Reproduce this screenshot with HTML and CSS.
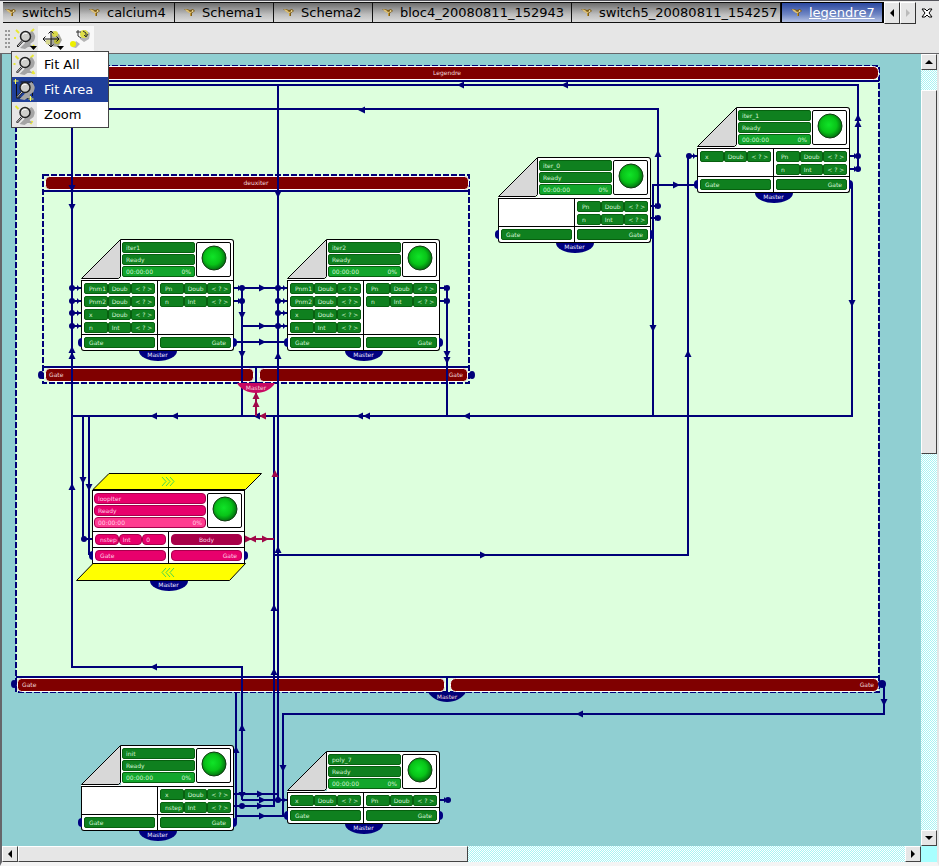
FILE: index.html
```html
<!DOCTYPE html>
<html lang="en">
<head>
<meta charset="utf-8">
<title>legendre7</title>
<link rel="stylesheet" href="styles.css">
</head>
<body>
<svg class="defs" aria-hidden="true">
  <defs>
    <radialGradient id="led" cx="45%" cy="45%" r="55%">
      <stop offset="0" stop-color="#10e428"/><stop offset=".6" stop-color="#08c418"/><stop offset="1" stop-color="#047010"/>
    </radialGradient>
    <symbol id="lamp" viewBox="0 0 26 26"><circle cx="13" cy="13" r="12" fill="url(#led)" stroke="#123c12"/></symbol>
    <symbol id="fold" viewBox="0 0 40 42">
      <path d="M.5 39.500L39.500 .5V37.500L37.500 39.500Z" fill="#d8d8d8" stroke="#000"/>
      <path d="M0 40H40V41H0Z" fill="#fff"/><path d="M0 41H40V42H0Z"/>
    </symbol>
    <symbol id="tabicon" viewBox="0 0 12 10">
      <path d="M0 1L4 4L6 5V8H8V5L11 3L9 1L6 2L3 1Z" fill="#7c5c18"/>
      <path d="M1 1L4 2L6 4L9 3L7 5H5L2 3Z" fill="#dcc078"/><path d="M8 2L10 3L8 4Z" fill="#fff0b0"/><path d="M6.500 5V8" stroke="#c09838"/>
    </symbol>
    <symbol id="lens" viewBox="0 0 24 24">
      <path d="M7 21L12 16L13 8L19 4Q24 8 21 14L17 17L20 20H15L12 22Z" fill="#a4a4a4"/>
      <circle cx="12.500" cy="9.500" r="5" fill="#cfcfcb" stroke="#222" stroke-width="1.500"/>
      <path d="M9.500 8Q11 5.500 14 6.500" stroke="#fff" fill="none"/>
      <path d="M9 13.500L4 19L5 20L10 14.500" fill="#ddd" stroke="#222"/>
    </symbol>
    <symbol id="spark" viewBox="0 0 24 24"><path d="M3 3L6 6M21 2L18 5M3 11H1M20 18L22 21M19 20H22" stroke="#e8e838" stroke-width="2"/></symbol>
    <symbol id="move" viewBox="0 0 24 24">
      <path d="M12 4L19 7L22 13L18 20L10 19Z" fill="#a4a49c"/>
      <circle cx="15" cy="7" r="3" fill="#d8d848"/><circle cx="8" cy="15" r="2.500" fill="#d8d890"/><circle cx="17" cy="14" r="3" fill="#b8b838"/>
      <path d="M11 4V20M3 12H19M8.500 6.500L11 4L13.500 6.500M8.500 17.500L11 20L13.500 17.500M5.500 9.500L3 12L5.500 14.500M16.500 9.500L19 12L16.500 14.500" fill="none" stroke="#111"/>
    </symbol>
    <symbol id="rotate" viewBox="0 0 24 24">
      <path d="M17 3L22 6L21 12L16 15L12 12L14 8ZM8 14L12 17L8 21L4 20Z" fill="#b4b4b4"/>
      <circle cx="5" cy="17" r="3" fill="#eef000"/><circle cx="16" cy="7" r="4" fill="#dede48"/>
      <path d="M8 5H13M10 3V9L13 11M15 4L18 6V9M16 8L18 10L20 7" fill="none" stroke="#333"/>
    </symbol>
    <path id="ar" d="M-3-3.500L4 0L-3 3.500Z"/>
    <path id="al" d="M3-3.500L-4 0L3 3.500Z"/>
    <path id="au" d="M-3.500 3L0-4L3.500 3Z"/>
    <path id="ad" d="M-3.500-3L0 4L3.500-3Z"/>
    <circle id="dot" r="3"/>
    <path id="in" d="M0-1H9V1H0ZM5-3L8 0L5 3Z"/>
    <path id="master" d="M-19 0H19C16 6 8 10 0 10S-16 6-19 0Z"/>
  </defs>
</svg>

<nav class="tabbar" aria-label="Schemas">
  <div class="tabs">
    <button class="tab"><svg><use href="#tabicon"/></svg>switch5</button>
    <button class="tab"><svg><use href="#tabicon"/></svg>calcium4</button>
    <button class="tab"><svg><use href="#tabicon"/></svg>Schema1</button>
    <button class="tab"><svg><use href="#tabicon"/></svg>Schema2</button>
    <button class="tab"><svg><use href="#tabicon"/></svg>bloc4_20080811_152943</button>
    <button class="tab"><svg><use href="#tabicon"/></svg>switch5_20080811_154257</button>
    <button class="tab active"><svg><use href="#tabicon"/></svg><span>legendre7</span></button>
  </div>
  <button class="step" aria-label="Previous tabs"><svg viewBox="0 0 8 10"><path d="M6 1V9L2 5Z"/></svg></button>
  <button class="step off" aria-label="Next tabs" disabled><svg viewBox="0 0 8 10"><path d="M2 1V9L6 5Z"/></svg></button>
  <button class="close" aria-label="Close"><svg viewBox="0 0 12 10"><path d="M1 1H4L6 3L8 1H11L8 5L11 9H8L6 7L4 9H1L4 5Z" fill="#fff" stroke="#000"/></svg></button>
</nav>

<div class="toolbar">
  <span class="grip"></span>
  <div class="tool-wrap">
    <button class="tool pressed" aria-label="Zoom"><svg viewBox="0 0 24 24"><use href="#spark"/><use href="#lens"/><path d="M17 19H24L20.500 23Z"/></svg></button>
    <ul class="menu">
      <li><button><svg viewBox="0 0 24 24"><use href="#spark"/><use href="#lens"/></svg><span>Fit All</span></button></li>
      <li><button class="selected"><svg viewBox="0 0 24 24"><path d="M4 6V20H18M8 4H20V18" fill="none" stroke="#101010"/><use href="#lens"/><path d="M1 3H6M3 1V6M16 21H21M18 18V23" stroke="#ff5"/></svg><span>Fit Area</span></button></li>
      <li><button><svg viewBox="0 0 24 24"><path d="M3 3L6 6M20 18L18 21" stroke="#e8e838" stroke-width="2"/><use href="#lens"/></svg><span>Zoom</span></button></li>
    </ul>
  </div>
  <button class="tool" aria-label="Pan"><svg viewBox="0 0 24 24"><use href="#move"/><path d="M17 19H24L20.500 23Z"/></svg></button>
  <button class="tool" aria-label="Rotate"><svg viewBox="0 0 24 24"><use href="#rotate"/></svg></button>
</div>

<main class="view">
  <div class="canvas">
    <svg class="scene" viewBox="2 54 919 792">
      <g class="blocks">
        <rect class="area" x="16" y="66" width="863" height="626"/>
        <rect class="bar" x="17.500" y="66.500" width="861" height="13" rx="5"/>
        <rect class="bar" x="17.500" y="678.500" width="427" height="13" rx="4"/>
        <rect class="bar" x="450.500" y="678.500" width="428" height="13" rx="5"/>
        <path class="rule" d="M16 81H879M16 677H879M447 677V692"/>
        <text x="447" y="75" text-anchor="middle">Legendre</text>
        <text x="22" y="687">Gate</text><text x="874" y="687" text-anchor="end">Gate</text>
        <rect class="area" x="43" y="175" width="426" height="208"/>
        <rect class="bar" x="45.500" y="176.500" width="423" height="13" rx="4"/>
        <rect class="bar" x="45.500" y="368.500" width="208" height="13" rx="4"/>
        <rect class="bar" x="259.500" y="368.500" width="208" height="13" rx="4"/>
        <path class="rule" d="M43 191H469M43 367H469M256 367V383"/>
        <text x="256" y="185" text-anchor="middle">deuxiter</text>
        <text x="49" y="377">Gate</text><text x="463" y="377" text-anchor="end">Gate</text>
      </g>
      <g class="wires">
        <path d="M72 85H858V169M278 85V800M72 109H658V206M72 109V667H242V800M697 156H688V555H274M697 185H653V416M852 185V416H72M83 416V539H92M89 416V555M242 416V288H287M242 326H287M234 342H287M447 288V416M274 416V806H234M236 692V823M283 816V714H884V684M234 794H278M242 800H287M236 816H287"/>
        <path d="M440 288H447M440 301H447M234 288H242M234 301H242M850 156H858M850 169H858M651 206H658M651 218H658M440 800H448"/>
      </g>
      <g class="heads">
        <use href="#al" x="461" y="85"/><use href="#al" x="565" y="85"/><use href="#al" x="362" y="110"/>
        <use href="#al" x="154" y="416"/><use href="#al" x="175" y="416"/><use href="#al" x="257" y="416"/><use href="#al" x="360" y="416"/><use href="#al" x="367" y="416"/><use href="#al" x="467" y="416"/>
        <use href="#al" x="154" y="667"/><use href="#al" x="580" y="714"/>
        <use href="#ar" x="676" y="185"/><use href="#ar" x="483" y="555"/><use href="#ar" x="262" y="288"/><use href="#ar" x="262" y="326"/><use href="#ar" x="262" y="342"/>
        <use href="#ar" x="260" y="794"/><use href="#ar" x="262" y="800"/><use href="#ar" x="260" y="806"/><use href="#ar" x="262" y="816"/>
        <use href="#au" x="858" y="118"/><use href="#au" x="858" y="124"/><use href="#au" x="658" y="154"/><use href="#au" x="688" y="354"/>
        <use href="#au" x="72" y="350"/><use href="#au" x="72" y="356"/><use href="#au" x="72" y="487"/><use href="#au" x="278" y="356"/><use href="#au" x="278" y="550"/><use href="#au" x="274" y="608"/><use href="#au" x="274" y="672"/><use href="#au" x="242" y="728"/><use href="#au" x="236" y="750"/>
        <use href="#ad" x="72" y="188"/><use href="#ad" x="72" y="207"/><use href="#ad" x="278" y="194"/><use href="#ad" x="242" y="315"/><use href="#ad" x="242" y="354"/><use href="#ad" x="447" y="354"/><use href="#ad" x="447" y="360"/><use href="#ad" x="653" y="328"/><use href="#ad" x="852" y="303"/><use href="#ad" x="83" y="480"/><use href="#ad" x="89" y="487"/><use href="#ad" x="283" y="768"/><use href="#ad" x="884" y="702"/><use href="#ad" x="242" y="795"/>
        <use href="#dot" x="858" y="156"/><use href="#dot" x="858" y="169"/><use href="#dot" x="658" y="206"/><use href="#dot" x="658" y="218"/><use href="#dot" x="689" y="156"/>
        <use href="#dot" x="72" y="288"/><use href="#dot" x="72" y="301"/><use href="#dot" x="72" y="313"/><use href="#dot" x="72" y="326"/>
        <use href="#dot" x="278" y="288"/><use href="#dot" x="278" y="301"/><use href="#dot" x="278" y="313"/><use href="#dot" x="278" y="326"/>
        <use href="#dot" x="242" y="288"/><use href="#dot" x="242" y="301"/><use href="#dot" x="447" y="288"/><use href="#dot" x="447" y="301"/>
        <use href="#dot" x="84" y="539"/><use href="#dot" x="278" y="800"/><use href="#dot" x="242" y="806"/><use href="#dot" x="448" y="800"/>
        <use href="#in" x="72" y="288"/><use href="#in" x="72" y="301"/><use href="#in" x="72" y="313"/><use href="#in" x="72" y="326"/>
        <use href="#in" x="278" y="288"/><use href="#in" x="278" y="301"/><use href="#in" x="278" y="313"/><use href="#in" x="278" y="326"/>
        <use href="#in" x="688" y="156"/><use href="#in" x="278" y="800"/>
        <use href="#in" x="233" y="288"/><use href="#in" x="233" y="301"/><use href="#in" x="439" y="288"/><use href="#in" x="439" y="301"/><use href="#in" x="849" y="156"/><use href="#in" x="849" y="169"/><use href="#in" x="650" y="206"/><use href="#in" x="650" y="218"/><use href="#in" x="439" y="800"/>
        <ellipse cx="14" cy="684" rx="3" ry="4"/><ellipse cx="882" cy="684" rx="4" ry="4"/><ellipse cx="41" cy="375" rx="3" ry="4"/><ellipse cx="472" cy="375" rx="3" ry="4"/>
        <use href="#master" x="447" y="692"/>
      </g>
      <g class="crimson">
        <path d="M255 416V390H257V416ZM245 538H274V540H245Z"/>
        <use href="#au" x="256" y="404"/><use href="#au" x="256" y="396"/><use href="#al" x="263" y="416"/><use href="#al" x="253" y="539"/><use href="#ar" x="265" y="539"/><use href="#ar" x="248" y="539"/><use href="#au" x="275" y="474"/>
        <use class="rose" href="#master" x="256" y="383"/>
      </g>
      <g class="names"><text x="447" y="699" text-anchor="middle">Master</text><text x="256" y="390" text-anchor="middle">Master</text></g>
    </svg>

    <section class="node iter1">
      <div class="head"><svg class="fold"><use href="#fold"/></svg><div class="info"><div class="state"><p>iter1</p><p>Ready</p><p class="time"><span>00:00:00</span><span>0%</span></p></div><div class="light"><svg><use href="#lamp"/></svg></div></div></div>
      <div class="ports">
        <div><p><b>Pnm1</b><b>Doub</b><b>&lt; ? &gt;</b></p><p><b>Pnm2</b><b>Doub</b><b>&lt; ? &gt;</b></p><p><b>x</b><b>Doub</b><b>&lt; ? &gt;</b></p><p><b>n</b><b>Int</b><b>&lt; ? &gt;</b></p></div>
        <div><p><b>Pn</b><b>Doub</b><b>&lt; ? &gt;</b></p><p><b>n</b><b>Int</b><b>&lt; ? &gt;</b></p></div>
      </div>
      <div class="gates"><div><b>Gate</b></div><div><b>Gate</b></div></div>
      <div class="master">Master</div>
    </section>

    <section class="node iter2">
      <div class="head"><svg class="fold"><use href="#fold"/></svg><div class="info"><div class="state"><p>iter2</p><p>Ready</p><p class="time"><span>00:00:00</span><span>0%</span></p></div><div class="light"><svg><use href="#lamp"/></svg></div></div></div>
      <div class="ports">
        <div><p><b>Pnm1</b><b>Doub</b><b>&lt; ? &gt;</b></p><p><b>Pnm2</b><b>Doub</b><b>&lt; ? &gt;</b></p><p><b>x</b><b>Doub</b><b>&lt; ? &gt;</b></p><p><b>n</b><b>Int</b><b>&lt; ? &gt;</b></p></div>
        <div><p><b>Pn</b><b>Doub</b><b>&lt; ? &gt;</b></p><p><b>n</b><b>Int</b><b>&lt; ? &gt;</b></p></div>
      </div>
      <div class="gates"><div><b>Gate</b></div><div><b>Gate</b></div></div>
      <div class="master">Master</div>
    </section>

    <section class="node iter-0">
      <div class="head"><svg class="fold"><use href="#fold"/></svg><div class="info"><div class="state"><p>iter_0</p><p>Ready</p><p class="time"><span>00:00:00</span><span>0%</span></p></div><div class="light"><svg><use href="#lamp"/></svg></div></div></div>
      <div class="ports">
        <div></div>
        <div><p><b>Pn</b><b>Doub</b><b>&lt; ? &gt;</b></p><p><b>n</b><b>Int</b><b>&lt; ? &gt;</b></p></div>
      </div>
      <div class="gates"><div><b>Gate</b></div><div><b>Gate</b></div></div>
      <div class="master">Master</div>
    </section>

    <section class="node iter-1">
      <div class="head"><svg class="fold"><use href="#fold"/></svg><div class="info"><div class="state"><p>iter_1</p><p>Ready</p><p class="time"><span>00:00:00</span><span>0%</span></p></div><div class="light"><svg><use href="#lamp"/></svg></div></div></div>
      <div class="ports">
        <div><p><b>x</b><b>Doub</b><b>&lt; ? &gt;</b></p></div>
        <div><p><b>Pn</b><b>Doub</b><b>&lt; ? &gt;</b></p><p><b>n</b><b>Int</b><b>&lt; ? &gt;</b></p></div>
      </div>
      <div class="gates"><div><b>Gate</b></div><div><b>Gate</b></div></div>
      <div class="master">Master</div>
    </section>

    <section class="node init">
      <div class="head"><svg class="fold"><use href="#fold"/></svg><div class="info"><div class="state"><p>init</p><p>Ready</p><p class="time"><span>00:00:00</span><span>0%</span></p></div><div class="light"><svg><use href="#lamp"/></svg></div></div></div>
      <div class="ports">
        <div></div>
        <div><p><b>x</b><b>Doub</b><b>&lt; ? &gt;</b></p><p><b>nstep</b><b>Int</b><b>&lt; ? &gt;</b></p></div>
      </div>
      <div class="gates"><div><b>Gate</b></div><div><b>Gate</b></div></div>
      <div class="master">Master</div>
    </section>

    <section class="node poly-7">
      <div class="head"><svg class="fold"><use href="#fold"/></svg><div class="info"><div class="state"><p>poly_7</p><p>Ready</p><p class="time"><span>00:00:00</span><span>0%</span></p></div><div class="light"><svg><use href="#lamp"/></svg></div></div></div>
      <div class="ports">
        <div><p><b>x</b><b>Doub</b><b>&lt; ? &gt;</b></p></div>
        <div><p><b>Pn</b><b>Doub</b><b>&lt; ? &gt;</b></p></div>
      </div>
      <div class="gates"><div><b>Gate</b></div><div><b>Gate</b></div></div>
      <div class="master">Master</div>
    </section>

    <section class="node loop">
      <svg class="flap top" viewBox="0 0 186 17"><path d="M17 16.500L33 .5H185.500L169.500 16.500Z"/><path class="chev" d="M86 4L90 8.500L86 13M90 4L94 8.500L90 13M94 4L98 8.500L94 13"/></svg>
      <div class="head"><div class="info"><div class="state"><p>loopIter</p><p>Ready</p><p class="time"><span>00:00:00</span><span>0%</span></p></div><div class="light"><svg><use href="#lamp"/></svg></div></div></div>
      <div class="ports">
        <div><p><b>nstep</b><b>Int</b><b>0</b></p></div>
        <div><p class="body"><b>Body</b></p></div>
      </div>
      <div class="gates"><div><b>Gate</b></div><div><b>Gate</b></div></div>
      <svg class="flap bottom" viewBox="0 0 186 18"><path d="M17 .5H169.500L153.500 17.500H.5Z"/><path class="chev" d="M90 5L86 9.500L90 14M94 5L90 9.500L94 14M98 5L94 9.500L98 14"/></svg>
      <div class="master">Master</div>
    </section>
  </div>

  <div class="scroll vertical">
    <button aria-label="Scroll up"><svg viewBox="0 0 8 8"><path d="M0 6H8L4 2Z"/></svg></button>
    <span class="thumb"></span>
    <button aria-label="Scroll down"><svg viewBox="0 0 8 8"><path d="M0 2H8L4 6Z"/></svg></button>
  </div>
  <div class="scroll horizontal">
    <button aria-label="Scroll left"><svg viewBox="0 0 8 8"><path d="M6 0V8L2 4Z"/></svg></button>
    <span class="thumb"></span>
    <button aria-label="Scroll right"><svg viewBox="0 0 8 8"><path d="M2 0V8L6 4Z"/></svg></button>
  </div>
  <div class="corner"></div>
</main>
</body>
</html>
```
FILE: styles.css
```css
* { box-sizing: border-box; }

body {
  margin: 0;
  height: 100vh;
  display: flex;
  flex-direction: column;
  background: #e6e6e6;
  color: #000;
  font-family: "DejaVu Sans", sans-serif;
  font-size: 13px;
  border-top: 1px solid #55555c;
}

p, ul { margin: 0; padding: 0; list-style: none; }
b { font-weight: normal; }
button { font: inherit; color: inherit; margin: 0; padding: 0; border: 0; background: none; }
.defs { position: absolute; width: 0; height: 0; }

/* Tabs */
.tabbar {
  display: flex;
  align-items: flex-start;
  height: 23px;
  padding: 1px 2px 0 3px;
}
.tabs {
  flex: 1;
  display: grid;
  grid-template-columns: 77fr 95fr 99fr 99fr 199fr 209fr 103fr;
  height: 21px;
}
.tab {
  display: flex;
  align-items: center;
  gap: 6px;
  padding-left: 9px;
  overflow: hidden;
  white-space: nowrap;
  line-height: 20px;
  border: 1px solid #111;
  border-left: 0;
  background: linear-gradient(#6c6c6c, #bdbdbd 60%, #dcdcdc);
}
.tab:first-child { padding-left: 2px; gap: 5px; }
.tab svg { width: 12px; height: 10px; flex: none; }
.tab.active {
  color: #fff;
  text-decoration: underline;
  border: 1px solid #000;
  border-right-width: 2px;
  background: linear-gradient(#2b48a0, #6f86c4 60%, #b5c2e4);
}
.step {
  width: 16px;
  height: 22px;
  border: 1px solid #fff;
  border-right-color: #333;
  border-bottom-color: #333;
  background: #e6e6e6;
}
.step svg { width: 8px; height: 10px; display: block; margin: auto; }
.step.off path { fill: #bbb; }
.close { width: 21px; height: 22px; }
.close svg { width: 12px; height: 10px; display: block; margin: auto; }

/* Toolbar */
.toolbar {
  display: flex;
  align-items: center;
  height: 30px;
  padding: 2px 0 1px 5px;
  border-bottom: 1px solid #66666a;
}
.grip {
  width: 5px;
  height: 18px;
  margin-right: 2px;
  background: radial-gradient(circle at 1px 1px, #999 1px, transparent 1px) 0 0 / 3px 4px;
}
.tool-wrap { position: relative; }
.tool { display: block; width: 28px; height: 26px; background: #f8f8f8; }
.tool svg { display: block; width: 24px; height: 24px; margin: auto; }
.tool.pressed { width: 26px; background: #e6e6e6; }
.menu {
  position: absolute;
  z-index: 5;
  top: 25px;
  left: -1px;
  width: 98px;
  border: 1px solid #444;
  background: #fff;
}
.menu button {
  display: flex;
  align-items: center;
  gap: 7px;
  width: 100%;
  height: 25px;
  line-height: 25px;
  background: linear-gradient(90deg, #e6e6e6 25px, #fff 25px);
}
.menu svg { width: 25px; height: 24px; }
.menu .selected { color: #fff; background: #20409a; }

/* Work area */
.view {
  flex: 1;
  min-height: 0;
  display: grid;
  grid-template: 1fr 16px / 1fr 16px;
  border-left: 2px solid #66666a;
  border-right: 2px solid #e6e6e6;
  border-bottom: 4px solid #f4f4f4;
}
.canvas { position: relative; overflow: hidden; background: #90cfd2; }
.scene { position: absolute; left: 0; top: 0; width: 919px; height: 792px; }

.area { fill: #ddffdd; stroke: #000078; stroke-width: 2; stroke-dasharray: 6 2; }
.bar { fill: #800000; stroke: #fff; }
.rule, .wires { fill: none; stroke: #000078; stroke-width: 2; }
.heads { fill: #000078; }
.crimson { fill: #a00848; }
.rose { fill: #c80862; }
.scene text { font-size: 6px; fill: #f0d8d8; }

/* Nodes */
.node {
  position: absolute;
  width: 153px;
  font-size: 6px;
  line-height: 11px;
  color: #d4f4d4;
  --fill: #0f801f;
  --edge: #07600f;
  --time: #12a62c;
}
.head { display: flex; height: 42px; }
.fold { width: 40px; height: 42px; flex: none; }
.info {
  flex: 1;
  display: flex;
  gap: 1px;
  padding: 2px 2px 3px 1px;
  background: #fff;
  border: 1px solid #000;
  border-left: 0;
  border-top-right-radius: 3px;
}
.state { flex: 1; display: grid; grid-template-rows: repeat(3, 11px); gap: 1px; }
.state p {
  padding: 0 3px;
  line-height: 9px;
  background: var(--fill);
  border: 1px solid var(--edge);
  border-radius: 2px;
}
.state .time { display: flex; justify-content: space-between; background: var(--time); }
.light {
  width: 35px;
  height: 35px;
  padding: 2px 4px;
  border: 1px solid #000;
  border-radius: 2px;
}
.light svg { display: block; width: 26px; height: 26px; }
.ports, .gates {
  display: grid;
  grid-template-columns: 75fr 76fr;
  background: #fff;
  border: 1px solid #000;
  border-top: 0;
}
.gates { position: relative; border-radius: 0 0 3px 3px; }
.ports > div, .gates > div { padding: 2px; display: grid; gap: 2px; align-content: start; }
.ports > div { padding-bottom: 1px; }
.ports > div + div, .gates > div + div { border-left: 1px solid #000; }
.ports p { display: grid; grid-template-columns: repeat(3, 1fr); height: 11px; }
.node b {
  display: block;
  height: 11px;
  padding-left: 4px;
  line-height: 9px;
  overflow: hidden;
  white-space: nowrap;
  background: var(--fill);
  border: 1px solid var(--edge);
  border-radius: 2px;
}
.ports b + b { padding-left: 3px; }
.gates div + div b { text-align: right; padding-right: 4px; }
.gates::before, .gates::after {
  content: "";
  position: absolute;
  top: 3px;
  width: 4px;
  height: 9px;
  background: #000080;
}
.gates::before { right: 100%; border-radius: 4px 0 0 4px; }
.gates::after { left: 100%; border-radius: 0 4px 4px 0; }
.master {
  width: 38px;
  height: 10px;
  margin: 0 auto;
  line-height: 8px;
  text-align: center;
  color: #e8e8ff;
  background: #000080;
  border-radius: 0 0 19px 19px / 0 0 10px 10px;
}

.iter1 { left: 79px; top: 185px; }
.iter2 { left: 285px; top: 185px; }
.iter-0 { left: 496px; top: 103px; }
.iter-1 { left: 695px; top: 53px; }
.init { left: 79px; top: 691px; }
.poly-7 { left: 285px; top: 697px; }
.loop {
  left: 90px;
  top: 419px;
  color: #ffd0e4;
  --fill: #e8006c;
  --edge: #a8004c;
  --time: #ff3c90;
}
.loop .info { border: 1px solid #000; border-radius: 0; }
.loop .state p, .loop b { border-radius: 4px; }
.loop .ports > div { padding-bottom: 2px; }
.loop .gates { border-radius: 0; }
.loop .ports .body { display: block; }
.loop .body b { text-align: center; padding: 0; background: #a80048; }
.flap { display: block; width: 186px; margin-left: -16px; fill: #ff0; stroke: #000; }
.flap.top { height: 17px; }
.flap.bottom { height: 18px; margin-top: -1px; position: relative; }
.flap .chev { fill: none; stroke: #4cd84c; }

/* Scroll bars */
.scroll {
  display: flex;
  background: repeating-conic-gradient(#a8f4f4 0 25%, #fff 0 50%) 0 0 / 2px 2px;
}
.vertical { flex-direction: column; }
.scroll button, .thumb {
  flex: none;
  background: #e6e6e6;
  border: 1px solid #fff;
  border-right-color: #444;
  border-bottom-color: #444;
}
.scroll button { width: 16px; height: 16px; }
.scroll button svg { display: block; width: 8px; height: 8px; margin: auto; }
.vertical .thumb { margin-top: 20px; height: 46%; }
.horizontal .thumb { width: 49%; }
.scroll button:last-child { margin: auto 0 0 auto; }
.corner { background: #a8ffff; }
```
